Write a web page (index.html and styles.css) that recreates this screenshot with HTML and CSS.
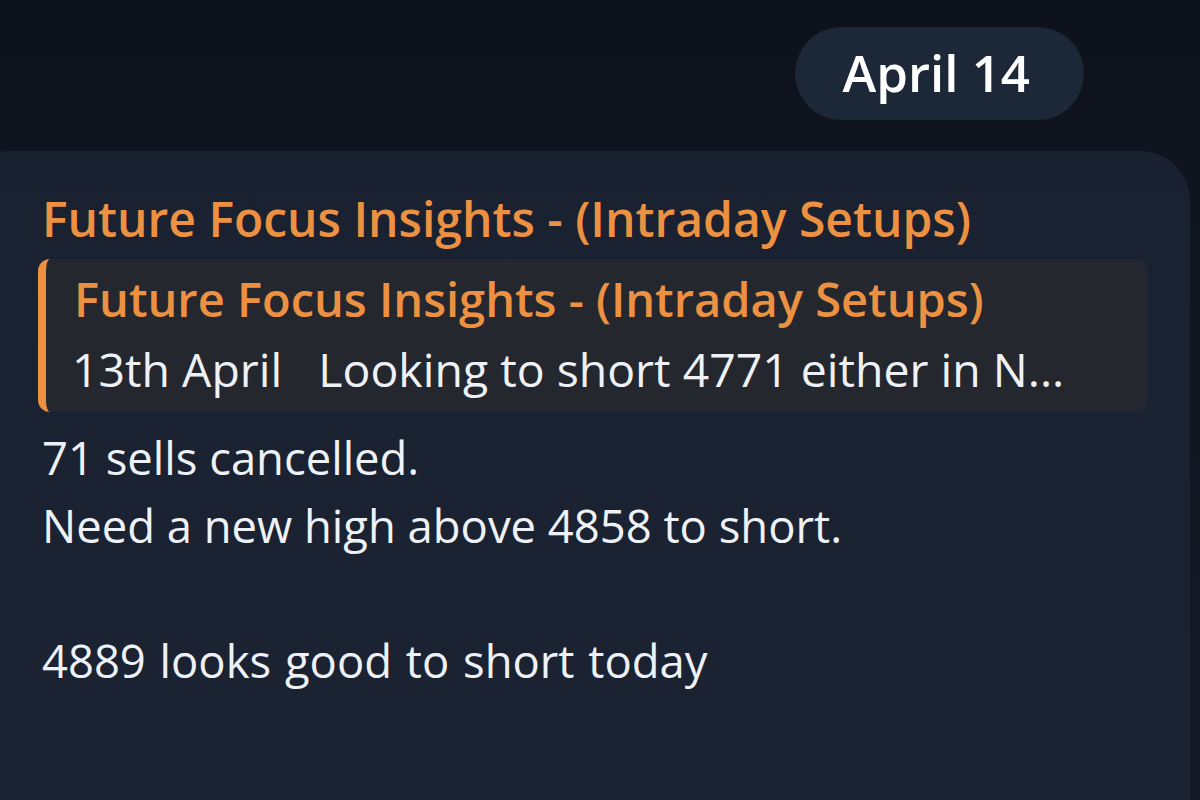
FILE: index.html
```html
<!DOCTYPE html>
<html>
<head>
<meta charset="utf-8">
<link rel="stylesheet" href="styles.css">
</head>
<body>
<div class="chat">
  <div class="date-row">
    <div class="date-pill">April 14</div>
  </div>
  <div class="bubble">
    <div class="author">Future Focus Insights - (Intraday Setups)</div>
    <div class="reply">
      <div class="reply-title">Future Focus Insights - (Intraday Setups)</div>
      <div class="reply-text">13th April &nbsp; Looking to short 4771 either in N...</div>
    </div>
    <div class="message">
      <div class="line">71 sells cancelled.</div>
      <div class="line">Need a new high above 4858 to short.</div>
      <div class="line">&nbsp;</div>
      <div class="line wide">4889 looks good to short today</div>
    </div>
  </div>
</div>
</body>
</html>
```

FILE: styles.css
```css
html, body {
  margin: 0;
  padding: 0;
  width: 1200px;
  height: 800px;
  overflow: hidden;
}
body {
  background: linear-gradient(180deg, #0d111c 0%, #10161f 30%, #131a26 100%);
  font-family: "Open Sans", "Noto Sans", sans-serif;
}
.chat {
  display: flex;
  flex-direction: column;
  height: 800px;
  box-sizing: border-box;
  padding-top: 27px;
}
.date-row {
  display: flex;
  justify-content: flex-end;
  padding-right: 116px;
}
.date-pill {
  height: 93px;
  box-sizing: border-box;
  padding: 0 54px 4px 48px;
  display: flex;
  align-items: center;
  background: #1c2737;
  border-radius: 47px;
  color: #ffffff;
  font-weight: 600;
  font-size: 51px;
}
.bubble {
  flex: 1;
  min-height: 0;
  overflow: hidden;
  margin-top: 31px;
  margin-left: -40px;
  margin-right: 10px;
  background: linear-gradient(180deg, #1a2131 0%, #1b2333 100%);
  border-radius: 50px 50px 0 0;
  padding: 38px 42px 0 82px;
}
.author {
  color: #ec9141;
  font-weight: 600;
  font-size: 48px;
  line-height: 60px;
}
.reply {
  margin-top: 10px;
  margin-left: -4px;
  background: #25272f;
  border-left: 8px solid #ec9141;
  border-radius: 12px;
  padding: 10px 30px 10px 28px;
}
.reply-title {
  color: #ec9141;
  font-weight: 600;
  font-size: 47px;
  line-height: 60px;
}
.reply-text {
  margin-top: 7px;
  margin-left: -2px;
  color: #eef2f7;
  font-size: 46.4px;
  line-height: 66px;
  white-space: nowrap;
}
.message {
  margin-top: 12px;
  color: #eef2f7;
  font-size: 45.4px;
}
.line {
  line-height: 67.5px;
}
.wide {
  word-spacing: 2px;
}
```
